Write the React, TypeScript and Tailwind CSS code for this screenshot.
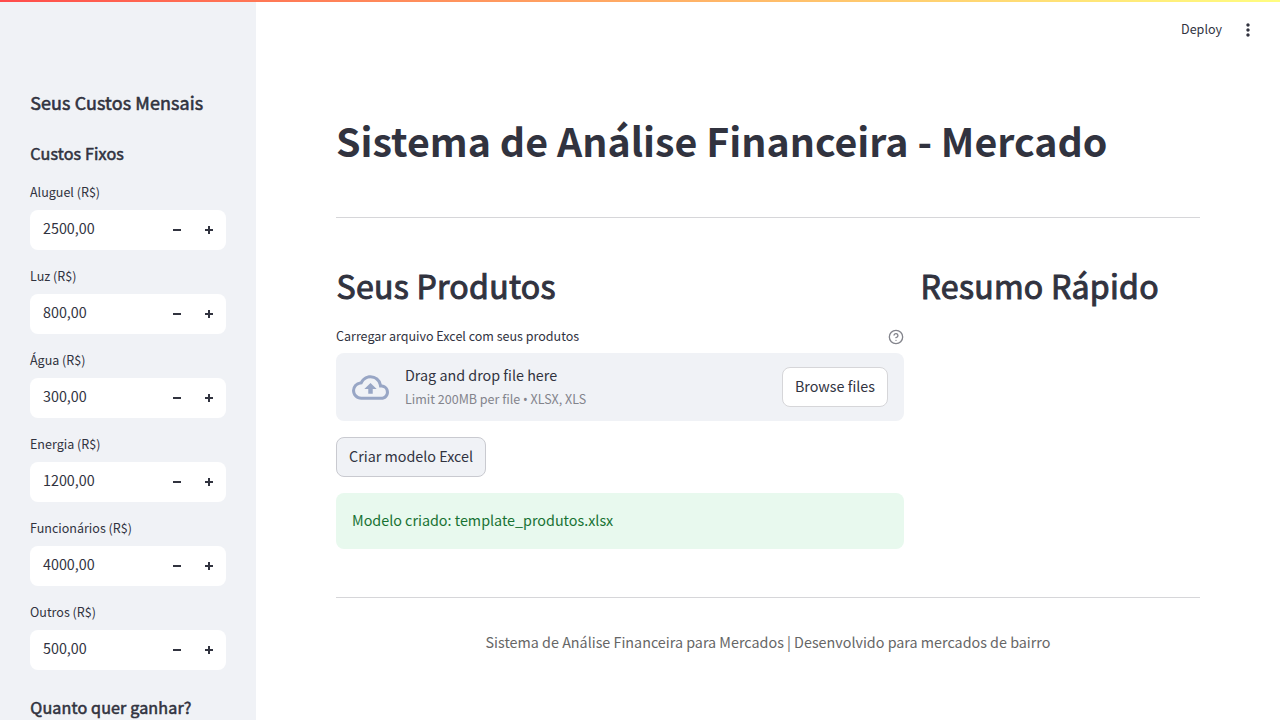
import { HelpCircle } from "lucide-react";
import { MdMoreVert, MdOutlineCloudUpload } from "react-icons/md";

const costs = [
  { label: "Aluguel (R$)", value: "2500,00" },
  { label: "Luz (R$)", value: "800,00" },
  { label: "Água (R$)", value: "300,00" },
  { label: "Energia (R$)", value: "1200,00" },
  { label: "Funcionários (R$)", value: "4000,00" },
  { label: "Outros (R$)", value: "500,00" },
];

function NumberField({ label, value }: { label: string; value: string }) {
  return (
    <div className="mb-4">
      <div className="mb-2 h-5 text-[12.53px] leading-5">{label}</div>
      <div className="flex h-10 items-center rounded-lg bg-white">
        <span className="flex-1 pl-[13px] pb-[4px] text-[14.33px] leading-6">{value}</span>
        <button aria-label="Diminuir" className="flex h-10 w-8 items-center justify-center pr-[2px]">
          <svg viewBox="0 0 8 8" className="h-2 w-2 fill-current" shapeRendering="crispEdges">
            <path d="M0 3v2h8V3z" />
          </svg>
        </button>
        <button aria-label="Aumentar" className="flex h-10 w-8 items-center justify-center pr-[2px]">
          <svg viewBox="0 0 8 8" className="h-2 w-2 fill-current" shapeRendering="crispEdges">
            <path d="M3 0v3H0v2h3v3h2V5h3V3H5V0z" />
          </svg>
        </button>
      </div>
    </div>
  );
}

export default function App() {
  return (
    <div className="flex h-[720px] w-[1280px] flex-col overflow-hidden bg-white font-['Noto_Sans_CJK_SC',sans-serif] text-[#31333f]">
      <div className="relative z-10 h-[2px] shrink-0 bg-linear-to-r from-[#ff4b4b] to-[#fffd80]" />
      <div className="-mt-[2px] flex h-[720px] shrink-0">
        <aside className="h-full w-64 shrink-0 overflow-hidden bg-[#f0f2f6] px-[30px] pt-[88px]">
          <h2 className="h-7 pl-[0.3px] text-[17.91px] leading-7 tracking-[0.11px] whitespace-nowrap [-webkit-text-stroke:0.6px_#31333f]">Seus Custos Mensais</h2>
          <h3 className="mt-[25px] h-6 pl-[0.3px] text-[16.12px] leading-6 tracking-[0.13px] [-webkit-text-stroke:0.55px_#31333f]">Custos Fixos</h3>
          <div className="mt-[17px]">
            {costs.map((c) => (
              <NumberField key={c.label} label={c.label} value={c.value} />
            ))}
          </div>
          <h3 className="mt-6 h-6 pt-[1px] pl-[0.3px] text-[16.12px] leading-6 tracking-[0.13px] whitespace-nowrap [-webkit-text-stroke:0.55px_#31333f]">Quanto quer ganhar?</h3>
        </aside>
        <main className="flex flex-1 flex-col">
          <header className="flex h-[60px] items-center justify-end pr-[22px]">
            <span className="pb-[2px] text-[12.53px] leading-5">Deploy</span>
            <MdMoreVert className="ml-4 h-5 w-5" />
          </header>
          <div className="px-20">
            <h1 className="mt-[53px] h-[56px] text-[39.36px] leading-[53px] font-bold tracking-[-0.01px] whitespace-nowrap">
              Sistema de Análise Financeira - Mercado
            </h1>
            <hr className="mt-12 border-[#d6d6d9]" />
            <div className="mt-[46px] flex gap-4">
              <section className="w-[568px]">
                <h2 className="h-[43px] pl-[0.6px] text-[32.1px] leading-[43px] tracking-[0.26px] [-webkit-text-stroke:1px_#31333f]">Seus Produtos</h2>
                <div className="mt-5 flex h-5 items-center justify-between">
                  <span className="pb-[2px] text-[12.53px] leading-5">Carregar arquivo Excel com seus produtos</span>
                  <HelpCircle className="h-4 w-4 text-[#83848c]" />
                </div>
                <div className="mt-[6px] flex h-[68px] items-center rounded-lg bg-[#f0f2f6] px-4">
                  <MdOutlineCloudUpload className="h-[37px] w-[37px] text-[#98a6c5]" />
                  <div className="ml-4 flex-1 pb-[3px]">
                    <div className="text-[14.33px] leading-6">Drag and drop file here</div>
                    <div className="pt-[2px] text-[12.53px] leading-5 text-[#83848c]">
                      Limit 200MB per file <span className="font-['Noto_Sans',sans-serif] text-[12.5px] leading-none">•</span> XLSX, XLS
                    </div>
                  </div>
                  <button className="h-10 rounded-lg border border-[#d6d6d9] bg-white px-3 pb-[2px] text-[14.33px] leading-6">
                    Browse files
                  </button>
                </div>
                <button className="mt-4 h-10 rounded-lg border border-[#c9cad0] bg-[#f0f2f6] px-3 pb-[2px] text-[14.33px] leading-6">
                  Criar modelo Excel
                </button>
                <div className="mt-4 h-14 rounded-lg bg-[#e8f9ee] px-4 pt-[15px] text-[14.33px] leading-6 text-[#177233]">
                  Modelo criado: template_produtos.xlsx
                </div>
              </section>
              <section className="flex-1">
                <h2 className="h-[43px] pl-[0.6px] text-[32.1px] leading-[43px] tracking-[0.26px] whitespace-nowrap [-webkit-text-stroke:1px_#31333f]">Resumo Rápido</h2>
              </section>
            </div>
            <hr className="mt-12 border-[#d6d6d9]" />
            <p className="mt-8 text-center text-[14.33px] leading-6 text-[#666666]">
              Sistema de Análise Financeira para Mercados | Desenvolvido para mercados de bairro
            </p>
          </div>
        </main>
      </div>
    </div>
  );
}
